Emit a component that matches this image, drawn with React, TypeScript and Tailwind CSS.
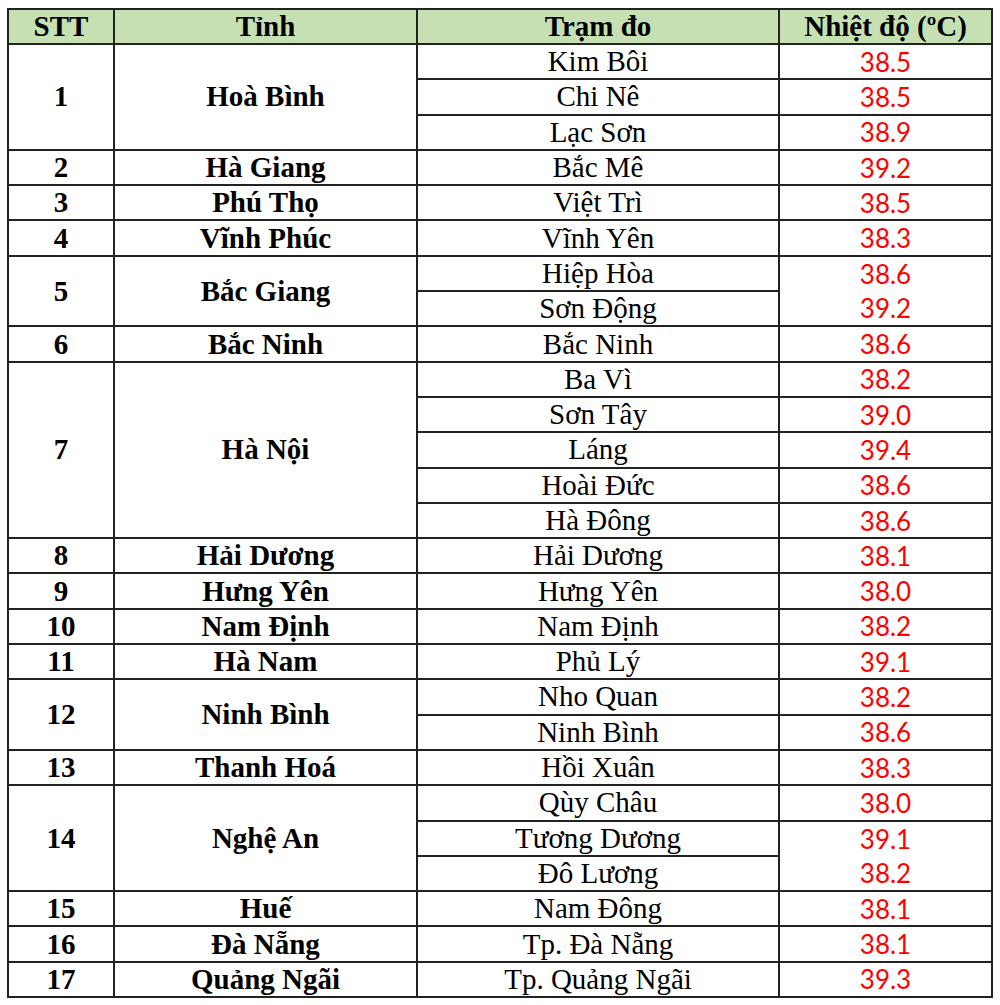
type Station = { name: string; temp: string; open?: boolean };

type Group = { stt: number; tinh: string; stations: Station[] };

// open = no line under this temperature cell (merged look in the source sheet)
const groups: Group[] = [
  { stt: 1, tinh: 'Hoà Bình', stations: [{ name: 'Kim Bôi', temp: '38.5' }, { name: 'Chi Nê', temp: '38.5' }, { name: 'Lạc Sơn', temp: '38.9' }] },
  { stt: 2, tinh: 'Hà Giang', stations: [{ name: 'Bắc Mê', temp: '39.2' }] },
  { stt: 3, tinh: 'Phú Thọ', stations: [{ name: 'Việt Trì', temp: '38.5' }] },
  { stt: 4, tinh: 'Vĩnh Phúc', stations: [{ name: 'Vĩnh Yên', temp: '38.3' }] },
  { stt: 5, tinh: 'Bắc Giang', stations: [{ name: 'Hiệp Hòa', temp: '38.6', open: true }, { name: 'Sơn Động', temp: '39.2' }] },
  { stt: 6, tinh: 'Bắc Ninh', stations: [{ name: 'Bắc Ninh', temp: '38.6' }] },
  {
    stt: 7,
    tinh: 'Hà Nội',
    stations: [
      { name: 'Ba Vì', temp: '38.2' },
      { name: 'Sơn Tây', temp: '39.0' },
      { name: 'Láng', temp: '39.4' },
      { name: 'Hoài Đức', temp: '38.6' },
      { name: 'Hà Đông', temp: '38.6' },
    ],
  },
  { stt: 8, tinh: 'Hải Dương', stations: [{ name: 'Hải Dương', temp: '38.1' }] },
  { stt: 9, tinh: 'Hưng Yên', stations: [{ name: 'Hưng Yên', temp: '38.0' }] },
  { stt: 10, tinh: 'Nam Định', stations: [{ name: 'Nam Định', temp: '38.2' }] },
  { stt: 11, tinh: 'Hà Nam', stations: [{ name: 'Phủ Lý', temp: '39.1' }] },
  { stt: 12, tinh: 'Ninh Bình', stations: [{ name: 'Nho Quan', temp: '38.2' }, { name: 'Ninh Bình', temp: '38.6' }] },
  { stt: 13, tinh: 'Thanh Hoá', stations: [{ name: 'Hồi Xuân', temp: '38.3' }] },
  {
    stt: 14,
    tinh: 'Nghệ An',
    stations: [
      { name: 'Qùy Châu', temp: '38.0' },
      { name: 'Tương Dương', temp: '39.1', open: true },
      { name: 'Đô Lương', temp: '38.2' },
    ],
  },
  { stt: 15, tinh: 'Huế', stations: [{ name: 'Nam Đông', temp: '38.1' }] },
  { stt: 16, tinh: 'Đà Nẵng', stations: [{ name: 'Tp. Đà Nẵng', temp: '38.1' }] },
  { stt: 17, tinh: 'Quảng Ngãi', stations: [{ name: 'Tp. Quảng Ngãi', temp: '39.3' }] },
];

const cell = 'border-2 border-[#222] p-0 text-center align-middle leading-none';
const serif = "font-['Liberation_Serif',serif] text-[29px]";

export default function App() {
  return (
    <div className="min-h-[1005px] w-[1000px] bg-white pl-[7px] pt-[8px]">
      <table className="w-[984px] table-fixed border-collapse text-black">
        <colgroup>
          <col className="w-[106px]" />
          <col className="w-[303px]" />
          <col className="w-[362px]" />
          <col className="w-[213px]" />
        </colgroup>
        <thead>
          <tr className="h-[35px] bg-[#c6e0b4]">
            <th className={`${cell} ${serif} font-bold`}>STT</th>
            <th className={`${cell} ${serif} font-bold`}>Tỉnh</th>
            <th className={`${cell} ${serif} font-bold`}>Trạm đo</th>
            <th className={`${cell} ${serif} font-bold`}>Nhiệt độ (ºC)</th>
          </tr>
        </thead>
        <tbody>
          {groups.map((g) =>
            g.stations.map((s, i) => {
              const prevOpen = i > 0 && g.stations[i - 1].open;
              return (
                <tr key={`${g.stt}-${i}`} className="h-[35.3px]">
                  {i === 0 && (
                    <>
                      <td rowSpan={g.stations.length} className={`${cell} ${serif} font-bold`}>
                        {g.stt}
                      </td>
                      <td rowSpan={g.stations.length} className={`${cell} ${serif} font-bold`}>
                        {g.tinh}
                      </td>
                    </>
                  )}
                  <td className={`${cell} ${serif}`}>{s.name}</td>
                  <td
                    className={`${cell} font-['Lato',sans-serif] text-[26px] text-[#f00] ${s.open ? 'border-b-0' : ''} ${
                      prevOpen ? 'border-t-0' : ''
                    }`}
                  >
                    {s.temp}
                  </td>
                </tr>
              );
            })
          )}
        </tbody>
      </table>
    </div>
  );
}
